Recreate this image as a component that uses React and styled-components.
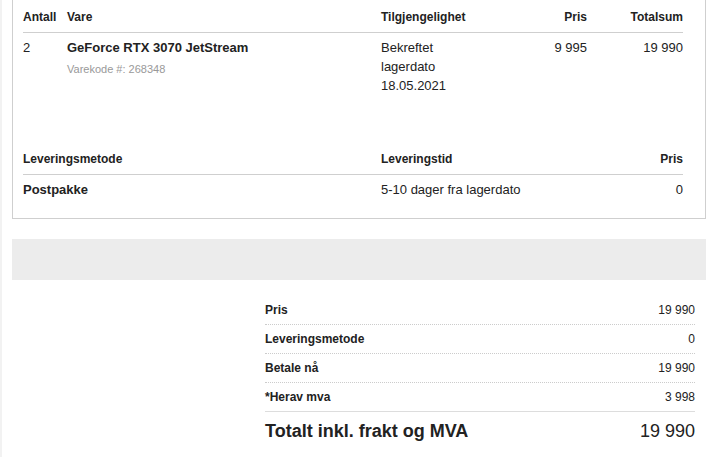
import { createGlobalStyle, styled } from "styled-components"

const TEXT = "#222222"
const LINE = "#cfcfcf"

const GlobalStyle = createGlobalStyle`
    html, body {
        margin: 0;
        padding: 0;
        background: #ffffff;
    }
    body {
        font-family: "Liberation Sans", Arial, sans-serif;
        color: ${TEXT};
    }
`

const Page = styled.div`
    width: 713px;
    height: 457px;
    box-sizing: border-box;
    border-left: 2px solid #f2f2f2;
    padding: 0 7px 0 10px;
    overflow: hidden;
`

const Card = styled.div`
    border: 1px solid ${LINE};
    border-top: none;
    padding: 8px 22px 10px 10px;
`

const Grid = styled.div`
    display: grid;
    grid-template-columns: ${(props) => props.cols};
    align-items: start;
`

const HeadRow = styled(Grid)`
    border-bottom: 1px solid ${LINE};
    padding-bottom: 6px;
    margin-top: ${(props) => props.top || "0px"};
`

const HeadCell = styled.div`
    font-size: 12px;
    font-weight: 700;
    line-height: 18px;
    text-align: ${(props) => props.align || "left"};
`

const BodyRow = styled(Grid)`
    padding-top: 5px;
    min-height: ${(props) => props.height || "auto"};
`

const Cell = styled.div`
    font-size: 13px;
    line-height: 19px;
    font-weight: ${(props) => (props.bold ? 700 : 400)};
    text-align: ${(props) => props.align || "left"};
`

const Code = styled.div`
    font-size: 11px;
    color: #999999;
    margin-top: 6px;
`

const Band = styled.div`
    height: 41px;
    background: #ececec;
    margin-top: 20px;
`

const Summary = styled.div`
    width: 430px;
    margin: 16px 11px 0 auto;
`

const SumRow = styled.div`
    display: flex;
    justify-content: space-between;
    align-items: center;
    height: 28px;
    font-size: 12px;
    border-bottom: 1px dotted #cccccc;
    &:nth-child(4) {
        border-bottom: 1px solid #dddddd;
    }
`

const SumLabel = styled.span`
    font-weight: 700;
`

const TotalRow = styled.div`
    display: flex;
    justify-content: space-between;
    align-items: center;
    height: 38px;
    font-size: 18px;
`

const TotalLabel = styled.span`
    font-weight: 700;
`

const orderCols = "44px 314px 126px 80px 96px"
const deliveryCols = "358px 1fr 80px"

const sums = [
    ["Pris", "19 990"],
    ["Leveringsmetode", "0"],
    ["Betale nå", "19 990"],
    ["*Herav mva", "3 998"],
]

export default () => {
    return (
        <>
        <GlobalStyle />
        <Page>
            <Card>
                <HeadRow cols={orderCols}>
                    <HeadCell>Antall</HeadCell>
                    <HeadCell>Vare</HeadCell>
                    <HeadCell>Tilgjengelighet</HeadCell>
                    <HeadCell align="right">Pris</HeadCell>
                    <HeadCell align="right">Totalsum</HeadCell>
                </HeadRow>
                <BodyRow cols={orderCols} height="100px">
                    <Cell>2</Cell>
                    <div>
                        <Cell bold>GeForce RTX 3070 JetStream</Cell>
                        <Code>Varekode #: 268348</Code>
                    </div>
                    <Cell>Bekreftet<br />lagerdato<br />18.05.2021</Cell>
                    <Cell align="right">9 995</Cell>
                    <Cell align="right">19 990</Cell>
                </BodyRow>
                <HeadRow cols={deliveryCols} top="12px">
                    <HeadCell>Leveringsmetode</HeadCell>
                    <HeadCell>Leveringstid</HeadCell>
                    <HeadCell align="right">Pris</HeadCell>
                </HeadRow>
                <BodyRow cols={deliveryCols} height="28px">
                    <Cell bold>Postpakke</Cell>
                    <Cell>5-10 dager fra lagerdato</Cell>
                    <Cell align="right">0</Cell>
                </BodyRow>
            </Card>
            <Band />
            <Summary>
                {sums.map(([label, value]) => (
                    <SumRow key={label}>
                        <SumLabel>{label}</SumLabel>
                        <span>{value}</span>
                    </SumRow>
                ))}
                <TotalRow>
                    <TotalLabel>Totalt inkl. frakt og MVA</TotalLabel>
                    <span>19 990</span>
                </TotalRow>
            </Summary>
        </Page>
        </>
    )
}
